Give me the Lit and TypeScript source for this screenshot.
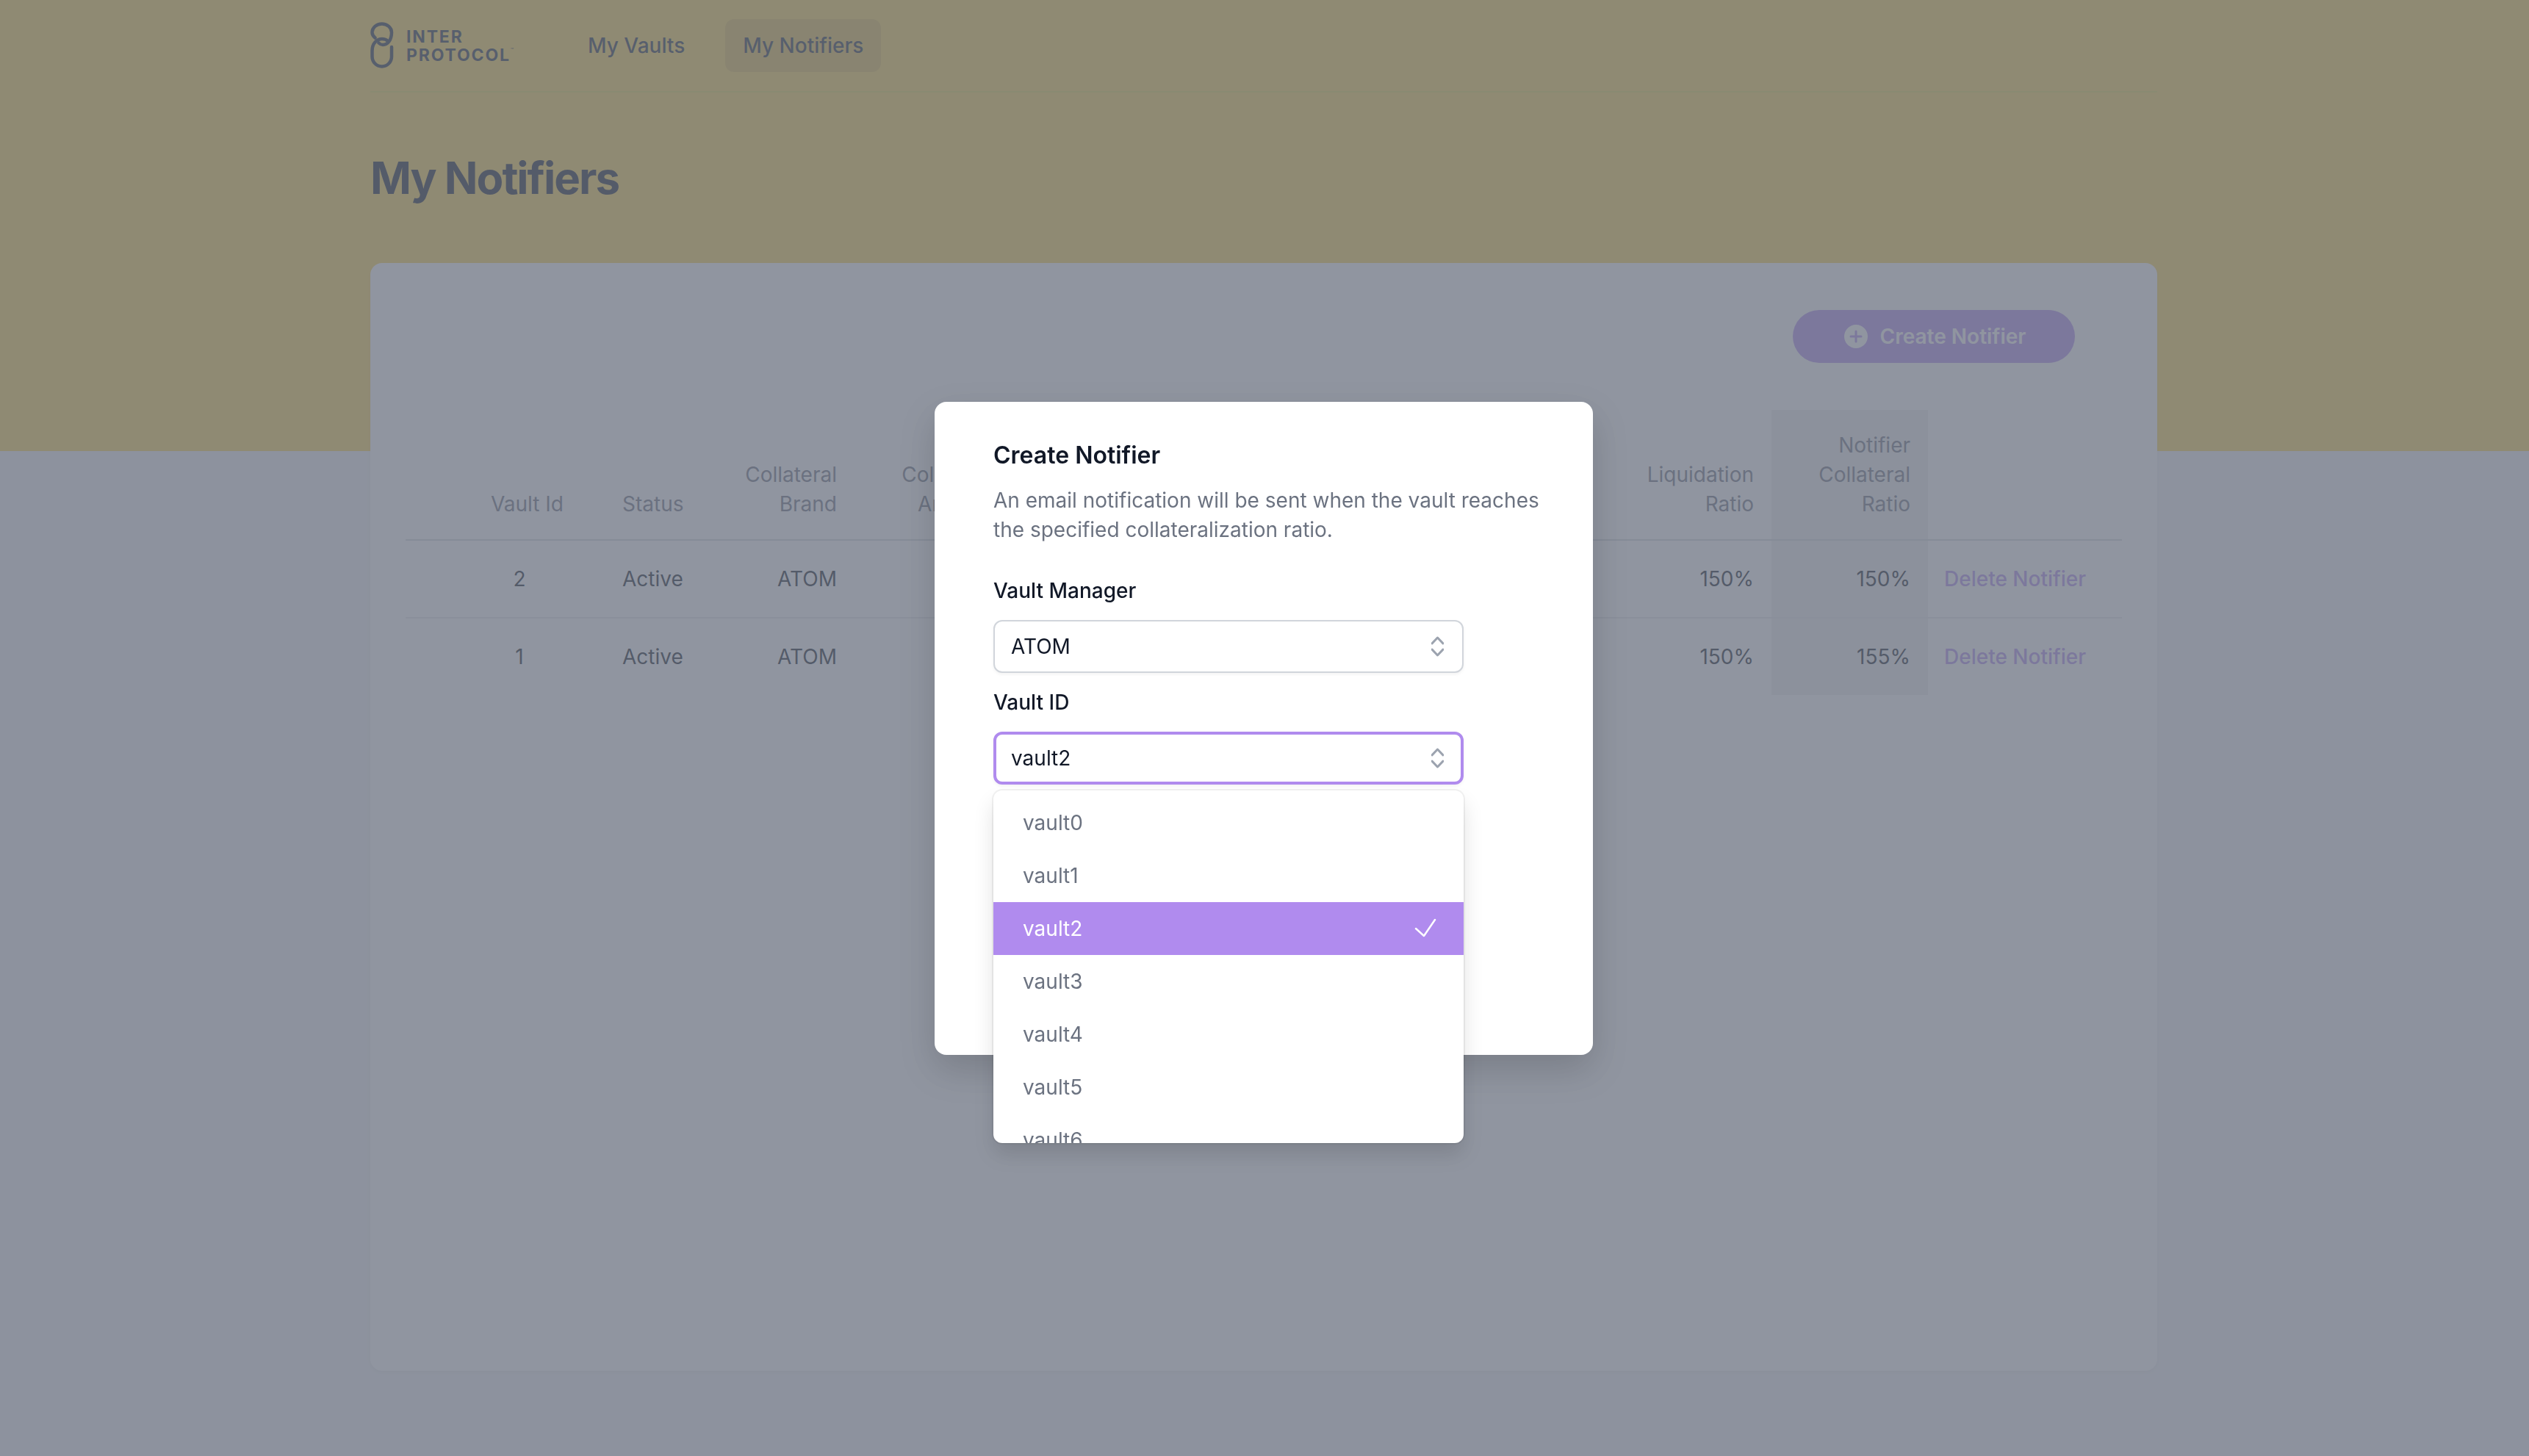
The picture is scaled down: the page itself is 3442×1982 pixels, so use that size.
import { html, css, svg, LitElement } from 'lit'
import { customElement, state } from 'lit/decorators.js'

const chevrons = svg`<path d="M1 10 L8.5 2 L16 10 M1 18 L8.5 26 L16 18" fill="none" stroke="#9ca3af" stroke-width="3" stroke-linecap="round" stroke-linejoin="round"/>`

@customElement('app-root')
export class AppRoot extends LitElement {
  @state()
  vaults = ['vault0', 'vault1', 'vault2', 'vault3', 'vault4', 'vault5', 'vault6']

  @state()
  selected = 'vault2'

  private notifiers = [
    { id: 2, status: 'Active', brand: 'ATOM', liquidation: '150%', ratio: '150%' },
    { id: 1, status: 'Active', brand: 'ATOM', liquidation: '150%', ratio: '155%' },
  ]

  private renderLogo() {
    return html`
      <div class="logo">
        <svg class="logo-mark" viewBox="0 0 33 63" width="33" height="63">
          <path
            d="M6.5 21.5 C3.5 19 2.5 16.5 2.5 14 A13.25 11.5 0 0 1 29 14 C29 24 24 31 17 31 C15 31 13 30 11.5 28.5"
            fill="none" stroke="#1f2937" stroke-width="4.5" stroke-linecap="round"/>
          <path
            d="M29 34 V47 A13.25 13.5 0 0 1 2.5 47 V39 C2.5 29 9 23 16 23 C19 23 22 24 24 26"
            fill="none" stroke="#1f2937" stroke-width="4.5" stroke-linecap="round"/>
        </svg>
        <div class="logo-text">INTER<br />PROTOCOL<span class="tm">™</span></div>
      </div>
    `
  }

  private renderTable() {
    return html`
      <table>
        <colgroup>
          <col class="c-id" /><col class="c-status" /><col class="c-brand" /><col class="c-amount" />
          <col class="c-gap" /><col class="c-liq" /><col class="c-ratio" /><col class="c-action" />
        </colgroup>
        <thead>
          <tr>
            <th class="id">Vault Id</th>
            <th class="left">Status</th>
            <th>Collateral<br />Brand</th>
            <th>Collateral<br />Amount</th>
            <th></th>
            <th>Liquidation<br />Ratio</th>
            <th class="shade">Notifier<br />Collateral<br />Ratio</th>
            <th></th>
          </tr>
        </thead>
        <tbody>
          ${this.notifiers.map(
            (n) => html`
              <tr>
                <td class="num">${n.id}</td>
                <td class="left">${n.status}</td>
                <td>${n.brand}</td>
                <td></td>
                <td></td>
                <td>${n.liquidation}</td>
                <td class="shade">${n.ratio}</td>
                <td class="left"><a class="delete">Delete Notifier</a></td>
              </tr>
            `
          )}
        </tbody>
      </table>
    `
  }

  private renderModal() {
    return html`
      <div class="overlay">
        <div class="modal">
          <h3>Create Notifier</h3>
          <p>An email notification will be sent when the vault reaches the specified collateralization ratio.</p>
          <label>Vault Manager</label>
          <div class="select">
            <span>ATOM</span>
            <svg viewBox="0 0 17 28" width="17" height="28">${chevrons}</svg>
          </div>
          <label>Vault ID</label>
          <div class="field">
            <div class="select focus">
              <span>${this.selected}</span>
              <svg viewBox="0 0 17 28" width="17" height="28">${chevrons}</svg>
            </div>
            <ul class="options">
              ${this.vaults.map(
                (v) => html`
                  <li class=${v === this.selected ? 'active' : ''}>
                    <span>${v}</span>
                    ${v === this.selected
                      ? html`<svg class="check" viewBox="0 0 30 26" width="30" height="26">
                          <path d="M2 14 L13 24 L28 2" fill="none" stroke="#fff" stroke-width="2.5" stroke-linecap="round" stroke-linejoin="round"/>
                        </svg>`
                      : ''}
                  </li>
                `
              )}
            </ul>
          </div>
        </div>
      </div>
    `
  }

  render() {
    return html`
      <main>
        <header>
          ${this.renderLogo()}
          <nav>
            <a>My Vaults</a>
            <a class="current">My Notifiers</a>
          </nav>
        </header>
        <h1>My Notifiers</h1>
        <section class="card">
          <div class="actions">
            <button>
              <svg viewBox="0 0 32 32" width="32" height="32">
                <circle cx="16" cy="16" r="16" fill="#fff"/>
                <path d="M16 9 V23 M9 16 H23" stroke="#b08bee" stroke-width="3" stroke-linecap="round"/>
              </svg>
              Create Notifier
            </button>
          </div>
          ${this.renderTable()}
        </section>
      </main>
      ${this.renderModal()}
    `
  }

  static styles = css`
    :host {
      display: block;
      min-height: 1982px;
      font-family: Inter, 'Liberation Sans', sans-serif;
      font-size: 28px;
      line-height: 40px;
      color: #111827;
      background: linear-gradient(#fcd34d 614px, #f3f4f6 614px);
    }

    main {
      width: 2432px;
      margin-left: 504px;
    }

    header {
      display: flex;
      align-items: center;
      height: 124px;
      border-bottom: 2px solid #e4d24a;
    }

    .logo {
      display: flex;
      align-items: center;
      gap: 16px;
      width: 272px;
      margin-top: -2px;
    }

    .logo-text {
      padding-top: 4px;
      font-size: 23px;
      line-height: 25px;
      font-weight: 700;
      letter-spacing: 0.08em;
      color: #1f2937;
      white-space: nowrap;
    }

    .tm {
      font-size: 7px;
      font-weight: 400;
      letter-spacing: 0;
      vertical-align: 12px;
      line-height: 0;
    }

    nav {
      display: flex;
      gap: 31px;
    }

    nav a {
      padding: 16px 24px;
      border-radius: 12px;
      font-weight: 500;
      color: #1f2937;
    }

    nav a.current {
      background: rgba(0, 0, 0, 0.1);
    }

    h1 {
      margin: 80px 0 80px;
      font-size: 60px;
      line-height: 72px;
      font-weight: 700;
      letter-spacing: -2px;
      color: #111827;
    }

    .card {
      box-sizing: border-box;
      height: 1508px;
      padding: 64px 48px;
      background: #fff;
      border-radius: 16px;
      box-shadow: 0 2px 6px rgba(0, 0, 0, 0.06);
    }

    .actions {
      display: flex;
      justify-content: flex-end;
      padding-right: 64px;
      margin-bottom: 64px;
    }

    button {
      display: flex;
      align-items: center;
      justify-content: center;
      gap: 17px;
      width: 384px;
      height: 72px;
      padding: 0 0 0 3px;
      border: none;
      border-radius: 36px;
      background: #b08bee;
      color: #fff;
      font: 600 28px/40px Inter, 'Liberation Sans', sans-serif;
    }

    table {
      width: 2336px;
      table-layout: fixed;
      border-collapse: collapse;
    }

    .c-id { width: 271px; }
    .c-status { width: 132px; }
    .c-brand { width: 208px; }
    .c-amount { width: 213px; }
    .c-liq { width: 211px; }
    .c-ratio { width: 213px; }
    .c-action { width: 264px; }

    th {
      padding: 28px 24px;
      font-weight: 400;
      text-align: right;
      vertical-align: bottom;
      color: #6b7280;
    }

    thead tr {
      border-bottom: 2px solid #d1d5db;
    }

    tbody tr {
      border-bottom: 2px solid #e5e7eb;
    }

    tbody tr:last-child {
      border-bottom: none;
    }

    td {
      height: 104px;
      padding: 0 24px;
      text-align: right;
      white-space: nowrap;
    }

    th.id {
      padding-right: 56px;
    }

    td.num {
      padding-left: 63px;
      text-align: center;
    }

    .left,
    th.left {
      text-align: left;
    }

    .shade {
      background: rgba(0, 0, 0, 0.07);
    }

    .delete {
      margin-left: -2px;
      font-weight: 500;
      color: #b08bee;
    }

    .overlay {
      position: fixed;
      inset: 0;
      display: flex;
      align-items: center;
      justify-content: center;
      padding-right: 2px;
      background: rgba(107, 114, 128, 0.75);
    }

    .modal {
      box-sizing: border-box;
      width: 896px;
      height: 889px;
      padding: 49px 48px 0 80px;
      background: #fff;
      border-radius: 16px;
      box-shadow: 0 20px 50px rgba(0, 0, 0, 0.16);
    }

    h3 {
      margin: 0 0 17px;
      font-size: 32px;
      line-height: 48px;
      font-weight: 600;
      color: #111827;
    }

    p {
      margin: 0 0 43px;
      color: #6b7280;
    }

    label {
      display: block;
      margin-bottom: 20px;
      font-weight: 500;
      color: #111827;
    }

    .field {
      position: relative;
      width: 640px;
    }

    .select {
      box-sizing: border-box;
      display: flex;
      align-items: center;
      justify-content: space-between;
      width: 640px;
      height: 72px;
      margin-bottom: 20px;
      padding: 0 25px 0 22px;
      border: 2px solid #d1d5db;
      border-radius: 12px;
      background: #fff;
      box-shadow: 0 2px 4px rgba(0, 0, 0, 0.05);
    }

    .select.focus {
      border: 4px solid #b08bee;
      padding: 0 23px 0 20px;
    }

    .options {
      position: absolute;
      top: 80px;
      left: 0;
      box-sizing: border-box;
      width: 640px;
      height: 480px;
      margin: 0;
      padding: 8px 0;
      overflow: hidden;
      list-style: none;
      background: #fff;
      border-radius: 12px;
      box-shadow: 0 0 0 2px rgba(0, 0, 0, 0.05), 0 16px 28px rgba(0, 0, 0, 0.12);
    }

    .options li {
      box-sizing: border-box;
      display: flex;
      align-items: center;
      justify-content: space-between;
      height: 72px;
      padding: 0 37px 0 40px;
      color: #6b7280;
    }

    .options li.active {
      background: #b08bee;
      color: #fff;
    }

    .check {
      margin-top: -2px;
    }
  `
}

declare global {
  interface HTMLElementTagNameMap {
    'app-root': AppRoot
  }
}
